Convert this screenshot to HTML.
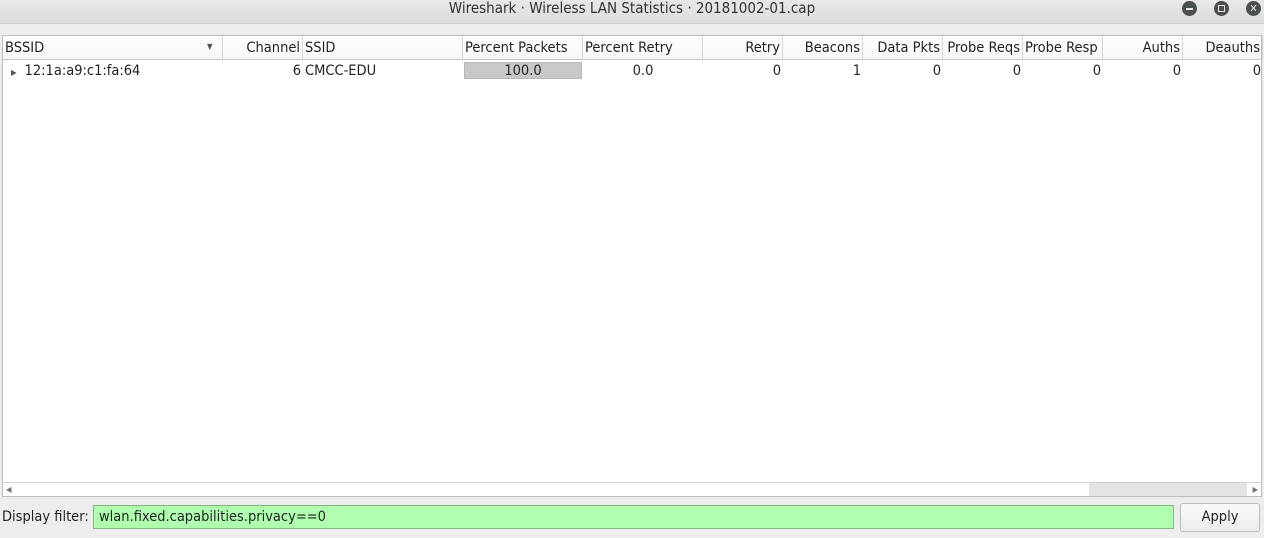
<!DOCTYPE html>
<html><head><style>
*{margin:0;padding:0;box-sizing:border-box}
body{width:1264px;height:538px;background:#ededed;font-family:"DejaVu Sans Condensed","Liberation Sans Narrow","Liberation Sans",sans-serif;font-size:14.5px;color:#1e2224;position:relative;overflow:hidden}
.title{position:absolute;left:0;top:0;width:1264px;height:24px;background:linear-gradient(#e8e8e8,#dcdcdc);border-bottom:1px solid #cfcfcf;text-align:center;line-height:17px;font-size:15px;color:#2e3436}
.btn{position:absolute;top:1px;width:15px;height:15px;border-radius:50%;background:#4a4f52}
.table{position:absolute;left:2px;top:35px;width:1260px;height:462px;background:#fff;border:1px solid #bdbdbd}
.hdr{position:absolute;top:0;left:0;height:24px;width:100%;border-bottom:1px solid #c8c8c8;background:linear-gradient(#fff,#f7f7f7)}
.c{position:absolute;height:23px;line-height:25px;white-space:nowrap;padding:0 2px;overflow:hidden}
.hdr .c{border-right:1px solid #d6d6d6}
.r{text-align:right}
.row{position:absolute;top:24px;left:0;width:100%;height:21px}
.row .c{height:21px;line-height:22px}
.sb{position:absolute;left:0;bottom:0;width:100%;height:14px;border-top:1px solid #d0d0d0;background:#fff}
</style></head><body>
<div class="title">Wireshark · Wireless LAN Statistics · 20181002-01.cap</div>
<div class="btn" style="left:1182px"><div style="position:absolute;left:4px;top:7px;width:7px;height:2px;background:#e8e8e8"></div></div>
<div class="btn" style="left:1214px"><div style="position:absolute;left:4px;top:4px;width:7px;height:7px;border:1.5px solid #e8e8e8"></div></div>
<div class="btn" style="left:1246px;color:#e8e8e8;font-size:11px;line-height:15px;text-align:center">✕</div>
<div class="table">
<div class="hdr">
<div class="c" style="left:0;width:220px">BSSID<span style="position:absolute;left:204px;font-size:8px;color:#555;line-height:22px">▼</span></div>
<div class="c r" style="left:220px;width:80px">Channel</div>
<div class="c" style="left:300px;width:160px">SSID</div>
<div class="c" style="left:460px;width:120px">Percent Packets</div>
<div class="c" style="left:580px;width:120px">Percent Retry</div>
<div class="c r" style="left:700px;width:80px">Retry</div>
<div class="c r" style="left:780px;width:80px">Beacons</div>
<div class="c r" style="left:860px;width:80px">Data Pkts</div>
<div class="c r" style="left:940px;width:80px">Probe Reqs</div>
<div class="c" style="left:1020px;width:80px">Probe Resp</div>
<div class="c r" style="left:1100px;width:80px">Auths</div>
<div class="c r" style="left:1180px;width:80px">Deauths</div>
</div>
<div class="row">
<div class="c" style="left:0;width:220px"><span style="font-size:8px;color:#555;margin:0 8px 0 6px">▶</span>12:1a:a9:c1:fa:64</div>
<div class="c r" style="left:220px;width:80px">6</div>
<div class="c" style="left:300px;width:160px">CMCC-EDU</div>
<div style="position:absolute;left:461px;top:2px;width:118px;height:17px;background:#c8c8c8;border:1px solid #b8b8b8;text-align:center;line-height:17px">100.0</div>
<div class="c" style="left:580px;width:120px;text-align:center">0.0</div>
<div class="c r" style="left:700px;width:80px">0</div>
<div class="c r" style="left:780px;width:80px">1</div>
<div class="c r" style="left:860px;width:80px">0</div>
<div class="c r" style="left:940px;width:80px">0</div>
<div class="c r" style="left:1020px;width:80px">0</div>
<div class="c r" style="left:1100px;width:80px">0</div>
<div class="c r" style="left:1180px;width:80px">0</div>
</div>
<div class="sb">
<span style="position:absolute;left:3px;top:0;font-size:8px;color:#777;line-height:13px">◀</span>
<div style="position:absolute;left:1086px;top:0;width:158px;height:13px;background:#e4e4e4"></div>
<span style="position:absolute;right:3px;top:0;font-size:8px;color:#777;line-height:13px">▶</span>
</div>
</div>
<div style="position:absolute;left:2px;top:507px;line-height:20px">Display filter:</div>
<div style="position:absolute;left:93px;top:505px;width:1081px;height:24px;background:#afffaf;border:1px solid #7fb87f;padding-left:5px;line-height:22px">wlan.fixed.capabilities.privacy==0</div>
<div style="position:absolute;left:1180px;top:503px;width:80px;height:29px;background:linear-gradient(#fafafa,#ececec);border:1px solid #bcbcbc;border-radius:3px;text-align:center;line-height:27px">Apply</div>
</body></html>
